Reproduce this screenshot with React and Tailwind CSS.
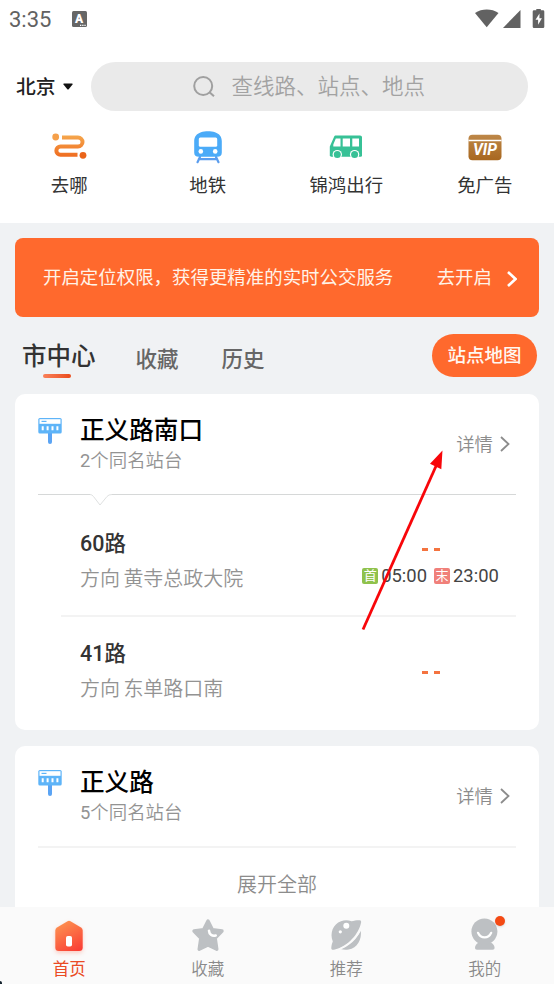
import clsx from 'clsx'

const shortcuts = [
  { name: '去哪', icon: RouteIcon },
  { name: '地铁', icon: MetroIcon },
  { name: '锦鸿出行', icon: BusIcon },
  { name: '免广告', icon: VipIcon },
]

const tabs = [
  { name: '首页', icon: HomeIcon, active: true },
  { name: '收藏', icon: StarIcon },
  { name: '推荐', icon: PlanetIcon },
  { name: '我的', icon: MeIcon },
]

function RouteIcon() {
  return (
    <svg width="36" height="28" viewBox="0 0 36 28" fill="none">
      <defs>
        <linearGradient id="route" x1="0" y1="0" x2="0" y2="28" gradientUnits="userSpaceOnUse">
          <stop stopColor="#f6ae52" />
          <stop offset="1" stopColor="#ee6017" />
        </linearGradient>
      </defs>
      <circle cx="4.7" cy="4" r="3.4" fill="#f5a04a" />
      <circle cx="32" cy="22.3" r="3.4" fill="#ea6419" />
      <path
        d="M11 4.500H27a4.500 4.500 0 0 1 0 9H9.500a4 4 0 0 0 0 8.300H26.500"
        stroke="url(#route)"
        strokeWidth="4"
      />
    </svg>
  )
}

function MetroIcon() {
  return (
    <svg width="28" height="33" viewBox="0 0 28 33">
      <path d="M6 26 3.500 31.200M22 26 24.500 31.200M4.800 28.200H23.200" stroke="#5a9dee" strokeWidth="2.200" strokeLinecap="round" />
      <path d="M7 1.200C11 0 17 0 21 1.200c4.500 1.500 6.800 4.500 6.800 9V21.500c0 3-1.600 4.300-4.600 4.300H4.800C1.800 25.800.2 24.500.2 21.500V10.200c0-4.500 2.300-7.500 6.800-9z" fill="#4babf8" />
      <rect x="4.800" y="6.500" width="18.400" height="9.300" rx="1.500" fill="#fff" />
      <circle cx="6.800" cy="20.400" r="2.300" fill="#fff" />
      <circle cx="21.200" cy="20.400" r="2.300" fill="#fff" />
    </svg>
  )
}

function BusIcon() {
  return (
    <svg width="34" height="25" viewBox="0 0 34 25">
      <path d="M7 .5H31c1.300 0 2 .7 2 2V20.500c0 .8-.4 1.200-1.200 1.200H2c-.8 0-1.200-.4-1.200-1.200v-9L5 1.900C5.400.9 6 .5 7 .5z" fill="#37c196" />
      <path d="M6.800 3.400h4.700v8H4.300V9.600zM13.700 3.400h7.300v8h-7.300zM23.300 3.400h6.700v8h-6.700z" fill="#fff" />
      <circle cx="8.300" cy="19.600" r="4.700" fill="#fff" />
      <circle cx="25.600" cy="19.600" r="4.700" fill="#fff" />
      <circle cx="8.300" cy="19.600" r="3.500" fill="#37c196" />
      <circle cx="25.600" cy="19.600" r="3.500" fill="#37c196" />
    </svg>
  )
}

function VipIcon() {
  return (
    <svg width="34" height="27" viewBox="0 0 34 27">
      <defs>
        <linearGradient id="vip" x1="0" y1="0" x2="0" y2="1">
          <stop stopColor="#bd8748" />
          <stop offset="1" stopColor="#a8671f" />
        </linearGradient>
      </defs>
      <rect x=".5" y=".8" width="33" height="25.500" rx="4" fill="url(#vip)" />
      <path d="M.5 6.500h33" stroke="#fff" strokeWidth="1.400" />
      <text x="17" y="21" textAnchor="middle" textLength="24" lengthAdjust="spacingAndGlyphs" fontFamily="Roboto" fontSize="16" fontWeight="700" fontStyle="italic" fill="#fff">VIP</text>
    </svg>
  )
}

function StopIcon() {
  return (
    <svg width="24" height="27" viewBox="0 0 24 27">
      <path d="M12 14v10" stroke="#5ba4f4" strokeWidth="4" strokeLinecap="round" />
      <rect x=".3" width="23.400" height="15.500" rx="1.600" fill="#5eb4f8" />
      <path d="M1.500 1.200h21v4.600h-21z" fill="#fff" />
      <path d="M3.500 3.400h5" stroke="#5eb4f8" strokeWidth="1.200" />
      <path d="M4.700 8.300v4M9.600 8.300v4M14.500 8.300v4M19.400 8.300v4" stroke="#fff" strokeWidth="2" />
    </svg>
  )
}

function HomeIcon() {
  return (
    <svg width="40" height="40" viewBox="0 0 40 40" className="drop-shadow-[0_2px_2px_rgba(255,70,30,0.25)]">
      <defs>
        <linearGradient id="home" x1="12" y1="6" x2="28" y2="35" gradientUnits="userSpaceOnUse">
          <stop stopColor="#fd9150" />
          <stop offset="1" stopColor="#fa3f35" />
        </linearGradient>
      </defs>
      <path d="M18.500 5.200q1.500-.9 3 0L32 11.600q1.700 1.100 1.700 3V31.500q0 3.500-3.500 3.500H9.800q-3.500 0-3.500-3.500V14.600q0-1.900 1.700-3z" fill="url(#home)" />
      <rect x="17" y="20" width="6" height="10.500" rx="1.800" fill="#fff" />
    </svg>
  )
}

function StarIcon() {
  return (
    <svg width="40" height="40" viewBox="0 0 40 40">
      <path d="M20 5 24.300 13.600 34 15 27.200 22.200 28.800 33.200 20 29 11.200 33.200 12.800 22.200 6 15 15.700 13.600z" fill="#bdc0c3" stroke="#bdc0c3" strokeWidth="3.400" strokeLinejoin="round" />
      <path d="M21 14.800c.2 3.500 2.800 5.500 6.700 4.700" stroke="#fff" strokeWidth="2.600" strokeLinecap="round" fill="none" />
    </svg>
  )
}

function PlanetIcon() {
  return (
    <svg width="40" height="40" viewBox="0 0 40 40">
      <path d="M25.500 5.300C28 4.500 31.500 4 33.800 4.200c1.200.2 1.500 1 1.300 2.200C33 17.500 22 30.500 8 33.700c-2 .4-2.800-.4-2.700-1.700.1-2.500.7-4.500 1.500-6.500C3.500 17 7 8 15 5.200c3.500-1.200 7.200-1.100 10.500.1z" fill="#bdc0c3" />
      <path d="M34.800 14.500C36 23.500 31.500 32 22.500 33.600c-3 .5-5.500.2-8-.5C22.500 29.800 30.500 23 34.800 14.500z" fill="#bdc0c3" />
      <path d="M35.500 11.500C31.500 21.500 23.500 29.500 12 33.800" stroke="#fafafa" strokeWidth="1.400" fill="none" />
      <circle cx="20.300" cy="9.800" r="3" fill="#fff" />
      <circle cx="14.300" cy="15.800" r="1.600" fill="#fff" />
    </svg>
  )
}

function MeIcon() {
  return (
    <svg width="40" height="40" viewBox="0 0 40 40">
      <path d="M13 27h13.600c1.500.6 3 3 3 4.700 0 1.300-.7 2-2 2H12c-1.300 0-2-.7-2-2 0-1.700 1.500-4.100 3-4.700z" fill="#bdc0c3" />
      <circle cx="19.400" cy="15.500" r="13" fill="#bdc0c3" />
      <path d="M13 16.800c2.800 6.200 10.400 6.200 13.200 0" stroke="#fff" strokeWidth="2.200" strokeLinecap="round" fill="none" />
    </svg>
  )
}

function Arrow({ className }) {
  return (
    <svg width="10" height="16" viewBox="0 0 10 16" fill="none" stroke="currentColor" className={className}>
      <path d="M1 1 8.500 8 1 15" />
    </svg>
  )
}

function StatusBar() {
  return (
    <div className="flex h-[38px] items-center pl-[9px] pr-[9px] text-[#626262]">
      <span className="pt-px text-[22px] leading-[38px]">3:35</span>
      <svg width="15" height="16" viewBox="0 0 15 16" className="ml-[21px]">
        <rect width="15" height="16" rx="1.500" fill="#666" />
        <text x="7.200" y="11.800" textAnchor="middle" fontFamily="Roboto" fontSize="12" fontWeight="900" fill="#fff">A</text>
        <path d="M8 14.300h6" stroke="#fff" strokeWidth="1.200" strokeDasharray="1.300 .9" />
      </svg>
      <svg width="70" height="20" viewBox="0 0 70 20" fill="#626262" className="ml-auto">
        <path d="M0 4C7-.6 16.500-.6 23.500 4L11.700 18.200z" />
        <path d="M45.500 1V19H28z" />
        <path d="M59 1.200h2.300V0h4.500v1.200H68q1.300 0 1.300 1.300V17.700q0 1.300-1.300 1.300H59q-1.300 0-1.300-1.300V2.500q0-1.300 1.300-1.300z" />
        <path d="M64.500 4.500 60.500 10.800h2.600v5l3.800-6.500h-2.500z" fill="#fff" />
      </svg>
    </div>
  )
}

function StationHead({ name, count }) {
  return (
    <div className="flex h-[100px] pl-[23px] pr-[29px]">
      <div className="w-[42px] pt-[24px]">
        <StopIcon />
      </div>
      <div className="flex-1 pt-[21px]">
        <h2 className="text-[24.6px] font-medium leading-[32px] text-black">{name}</h2>
        <p className="text-[18.4px] font-[350] leading-[28px] text-[#939393]">
          <span className="font-normal">{count}</span>个同名站台
        </p>
      </div>
      <div className="flex h-[100px] items-center gap-[7px] text-[18.4px] font-[350] text-[#8c8c8c]">
        <span className="pt-[2px]">详情</span>
        <Arrow className="stroke-[1.8]" />
      </div>
    </div>
  )
}

function LineRow({ line, to, first, last }) {
  return (
    <div className="flex pl-[65px] pr-[18px]">
      <div className="flex-1">
        <h3 className="pt-px text-[21.5px] font-medium leading-[32px] text-[#333]">{line}</h3>
        <p className="pb-px pt-[2px] text-[20px] font-[350] leading-[34px] text-[#939393] [word-spacing:-1.5px]">方向 {to}</p>
      </div>
      <div className={clsx('flex w-[180px] flex-col items-center', first ? 'pt-[21px]' : 'pt-[34px]')}>
        <div className="flex gap-[6px]">
          <span className="h-[3px] w-[6px] bg-[#f4733f]" />
          <span className="h-[3px] w-[6px] bg-[#f4733f]" />
        </div>
        {first && (
          <div className="mr-px mt-[13px] flex items-center whitespace-nowrap text-[18.4px] leading-[22px] text-[#444]">
            <span className="mr-[3px] flex size-[16px] items-center justify-center rounded-[2px] bg-[#8fc24c] text-[13px] text-white">首</span>
            <span className="pt-px">{first}</span>
            <span className="ml-[7px] mr-[3px] flex size-[16px] items-center justify-center rounded-[2px] bg-[#f0807a] text-[13px] text-white">末</span>
            <span className="pt-px">{last}</span>
          </div>
        )}
      </div>
    </div>
  )
}

export default function App() {
  return (
    <div className="relative flex h-[984px] w-[554px] flex-col overflow-hidden bg-[#f0f2f4] font-['Roboto','Noto_Sans_CJK_SC',sans-serif] text-[#333]">
      <header className="h-[223px] shrink-0 bg-white">
        <StatusBar />
        <div className="flex items-center pl-[16px] pr-[26px] pt-[24px]">
          <span className="pt-[2px] text-[19.8px] font-medium leading-[28px] text-[#222]">北京</span>
          <svg width="10" height="7" viewBox="0 0 10 7" className="ml-[7px]">
            <path d="M.8.500h8.400q.8.300.3 1L5.700 6.200q-.7.600-1.400 0L.5 1.500Q0 .8.800.500z" fill="#111" />
          </svg>
          <div className="ml-[18px] flex h-[49px] flex-1 items-center rounded-full bg-[#eaeaea] pl-[102px] text-[21.5px] font-[350] text-[#a2a2a2]">
            <svg width="22" height="22" viewBox="0 0 22 22" fill="none" stroke="#a0a0a0" strokeWidth="2" className="mr-[17px]">
              <circle cx="10.200" cy="10" r="9" />
              <path d="m16.500 16.300 4.500 4" />
            </svg>
            <span className="pt-[2px]">查线路、站点、地点</span>
          </div>
        </div>
        <nav className="grid grid-cols-4 pt-[18px]">
          {shortcuts.map(({ name, icon: Icon }) => (
            <div key={name} className="flex flex-col items-center">
              <div className="flex h-[36px] items-center">
                <Icon />
              </div>
              <span className="pt-[7px] text-[18.4px] leading-[28px] text-[#333]">{name}</span>
            </div>
          ))}
        </nav>
      </header>

      <main className="flex min-h-0 flex-1 flex-col overflow-hidden px-[15px] pt-[15px]">
        <div className="flex h-[79px] shrink-0 items-center rounded-[8px] bg-[#ff692d] pl-[28px] pr-[22px] text-[18.46px] text-[#fff3e8]">
          <span className="flex-1 pt-[3px]">开启定位权限，获得更精准的实时公交服务</span>
          <span className="pt-[3px]">去开启</span>
          <Arrow className="ml-[15px] mt-[2px] stroke-[2.6] text-white" />
        </div>

        <div className="flex h-[77px] shrink-0 items-start pl-[7px] pr-[2px] pt-[17px]">
          <div className="flex flex-col items-center pt-[6px]">
            <span className="text-[24.5px] font-medium leading-[34px]">市中心</span>
            <span className="mr-[4px] h-[4px] w-[28px] rounded-full bg-linear-to-r from-[#f98058] to-[#ea4b19]" />
          </div>
          <span className="ml-[40px] pt-[10px] text-[21.5px] font-medium leading-[32px] text-[#666]">收藏</span>
          <span className="ml-[43px] pt-[10px] text-[21.5px] font-medium leading-[32px] text-[#666]">历史</span>
          <button className="ml-auto h-[43px] w-[105px] rounded-full bg-[#ff692d] pt-px text-[18.5px] font-medium leading-[42px] text-[#fff8f2]">
            站点地图
          </button>
        </div>

        <section className="h-[336px] shrink-0 rounded-[10px] bg-white">
          <StationHead name="正义路南口" count={2} />
          <svg width="478" height="13" viewBox="0 0 478 13" fill="none" className="ml-[23px]">
            <path d="M0 .5H52M74 .5H478" stroke="#d6d8d8" />
            <path d="M52 .5q2 0 3.500 2L62 11l7-8.500q1.500-2 5-2" stroke="#dfe1e1" />
          </svg>
          <div className="pt-[20px]">
            <LineRow line="60路" to="黄寺总政大院" first="05:00" last="23:00" />
          </div>
          <div className="ml-[46px] mr-[23px] mt-[18px] h-[2px] bg-[#f3f3f3]" />
          <div className="pt-[20px]">
            <LineRow line="41路" to="东单路口南" />
          </div>
        </section>

        <section className="mt-[16px] h-[200px] shrink-0 rounded-[10px] bg-white">
          <StationHead name="正义路" count={5} />
          <div className="ml-[23px] mr-[23px] h-[2px] bg-[#f3f3f3]" />
          <p className="pt-[21px] text-center text-[20px] font-[350] leading-[32px] text-[#8c8c8c]">展开全部</p>
        </section>
      </main>

      <footer className="grid h-[77px] shrink-0 grid-cols-4 bg-[#fafafa]">
        {tabs.map(({ name, icon: Icon, active }) => (
          <div key={name} className="flex flex-col items-center pt-[9px]">
            <div className="relative">
              <Icon />
              {name === '我的' && (
                <span className="absolute right-0 top-0 size-[10px] rounded-full bg-[#f44a14] shadow-sm" />
              )}
            </div>
            <span
              className={clsx(
                'pt-[2px] text-[16.5px] leading-[24px]',
                active ? 'text-[#ea4b25]' : 'font-[350] text-[#8a8a8a]'
              )}
            >
              {name}
            </span>
          </div>
        ))}
      </footer>

      {/* pointer towards the details link */}
      <svg width="90" height="190" viewBox="0 0 90 190" className="absolute left-[358px] top-[445px]">
        <path d="M5 184.500 78.500 20" stroke="#f8060a" strokeWidth="2.800" />
        <path d="M84.500 5.500 83.300 24.200 72 18.800z" fill="#f8060a" />
      </svg>
      <span className="absolute bottom-0 left-0 h-[3px] w-[2px] rounded-tr-full bg-[#14232d]" />
    </div>
  )
}
